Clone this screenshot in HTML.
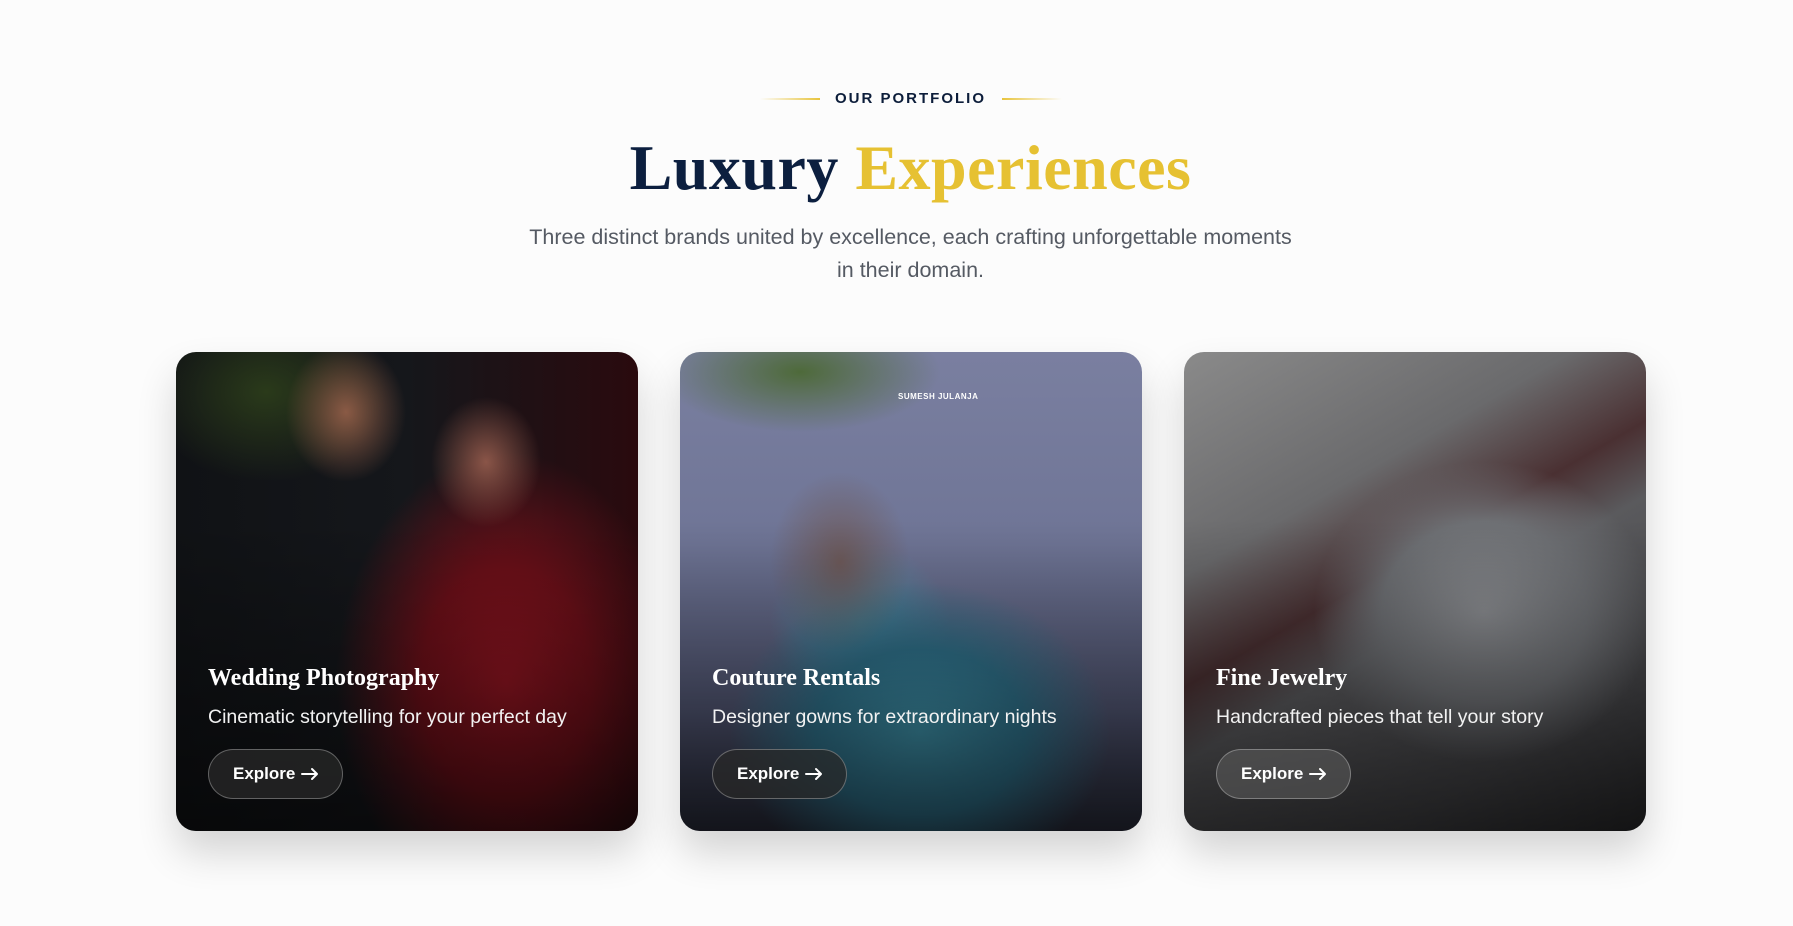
<!DOCTYPE html>
<html><head><meta charset="utf-8">
<style>
html,body{margin:0;padding:0;}
body{width:1793px;height:926px;background:#fcfcfc;font-family:"Liberation Sans",sans-serif;position:relative;overflow:hidden;}
.tag{position:absolute;top:88px;left:14px;width:1793px;text-align:center;font-size:15px;font-weight:700;letter-spacing:2px;color:#0c1d3a;line-height:22px;}
.ln{position:absolute;top:98px;height:2px;width:60px;}
.ln.l{left:760px;background:linear-gradient(90deg,rgba(232,196,60,0),#e8c43c);}
.ln.r{left:1002px;background:linear-gradient(90deg,#e8c43c,rgba(232,196,60,0));}
h1{position:absolute;top:125px;left:14px;width:1793px;text-align:center;margin:0;font-family:"Liberation Serif",serif;font-weight:700;font-size:64px;line-height:86px;color:#0c1f3f;letter-spacing:0.5px;}
h1 span{color:#e6c132;}
.sub{position:absolute;top:221px;left:14px;width:1793px;text-align:center;font-size:21.5px;line-height:33px;color:#555a63;}
.card{position:absolute;top:352px;width:462px;height:479px;border-radius:20px;overflow:hidden;box-shadow:0 22px 40px rgba(0,0,0,0.16);}
.ov{position:absolute;inset:0;background:linear-gradient(180deg,rgba(0,0,0,0) 35%,rgba(0,0,0,0.55) 100%);}
.t{position:absolute;left:32px;top:313px;font-family:"Liberation Serif",serif;font-weight:700;font-size:24px;color:#fff;}
.d{position:absolute;left:32px;top:354px;font-size:19.5px;color:#f2f2f2;}
.b{position:absolute;left:32px;top:397px;width:135px;height:50px;border-radius:26px;border:1px solid rgba(255,255,255,0.3);background:rgba(40,40,40,0.75);color:#fff;font-weight:700;font-size:17px;line-height:48px;box-sizing:border-box;padding-left:24px;}
.b svg{position:absolute;left:92px;top:17px;}
</style></head><body>
<div class="ln l"></div><div class="ln r"></div>
<div class="tag">OUR PORTFOLIO</div>
<h1>Luxury <span>Experiences</span></h1>
<div class="sub">Three distinct brands united by excellence, each crafting unforgettable moments<br>in their domain.</div>

<div class="card" style="left:176px;background:
radial-gradient(ellipse 60px 70px at 170px 60px,#8a5a45 0%,rgba(0,0,0,0) 100%),
radial-gradient(ellipse 55px 65px at 310px 110px,#8a5548 0%,rgba(0,0,0,0) 100%),
radial-gradient(ellipse 170px 230px at 330px 330px,#8c1420 0%,#6a0f18 50%,rgba(60,10,15,0) 100%),
radial-gradient(ellipse 120px 90px at 90px 40px,#2a3a1a,rgba(0,0,0,0)),
linear-gradient(90deg,#101215 0%,#15171b 50%,#2a0a0e 100%);">
<div class="ov"></div>
<div class="t">Wedding Photography</div>
<div class="d">Cinematic storytelling for your perfect day</div>
<div class="b">Explore<svg width="18" height="14" viewBox="0 0 18 14"><path d="M1 7H16M11 2L16 7L11 12" fill="none" stroke="#fff" stroke-width="2" stroke-linecap="round" stroke-linejoin="round"/></svg></div></div>

<div class="card" style="left:680px;background:
radial-gradient(ellipse 70px 90px at 160px 210px,#6e5a5a 0%,rgba(0,0,0,0) 100%),
radial-gradient(ellipse 190px 150px at 240px 380px,#3d8fa6 0%,#2f7089 55%,rgba(40,90,110,0) 100%),
radial-gradient(ellipse 90px 80px at 180px 270px,#4a8fa8 0%,rgba(0,0,0,0) 100%),
radial-gradient(ellipse 140px 60px at 120px 20px,#4e6a3a,rgba(0,0,0,0)),
linear-gradient(180deg,#7a7fa0 0%,#6f7596 40%,#4f5470 75%,#2a2d3c 100%);">
<div class="ov"></div>
<div style="position:absolute;left:218px;top:40px;font-size:8px;color:#fff;letter-spacing:0.5px;font-weight:700">SUMESH JULANJA</div>
<div class="t">Couture Rentals</div>
<div class="d">Designer gowns for extraordinary nights</div>
<div class="b">Explore<svg width="18" height="14" viewBox="0 0 18 14"><path d="M1 7H16M11 2L16 7L11 12" fill="none" stroke="#fff" stroke-width="2" stroke-linecap="round" stroke-linejoin="round"/></svg></div></div>

<div class="card" style="left:1184px;background:
radial-gradient(ellipse 170px 150px at 300px 260px,#8a8c90 0%,#6e7074 60%,rgba(90,90,95,0) 100%),
linear-gradient(150deg,#8a8a8a 0%,#6a6a6c 30%,#4a3032 45%,#5a5a5d 55%,#454548 80%,#2a2a2c 100%);">
<div class="ov"></div>
<div class="t">Fine Jewelry</div>
<div class="d">Handcrafted pieces that tell your story</div>
<div class="b" style="background:rgba(90,90,90,0.6)">Explore<svg width="18" height="14" viewBox="0 0 18 14"><path d="M1 7H16M11 2L16 7L11 12" fill="none" stroke="#fff" stroke-width="2" stroke-linecap="round" stroke-linejoin="round"/></svg></div></div>
</body></html>
